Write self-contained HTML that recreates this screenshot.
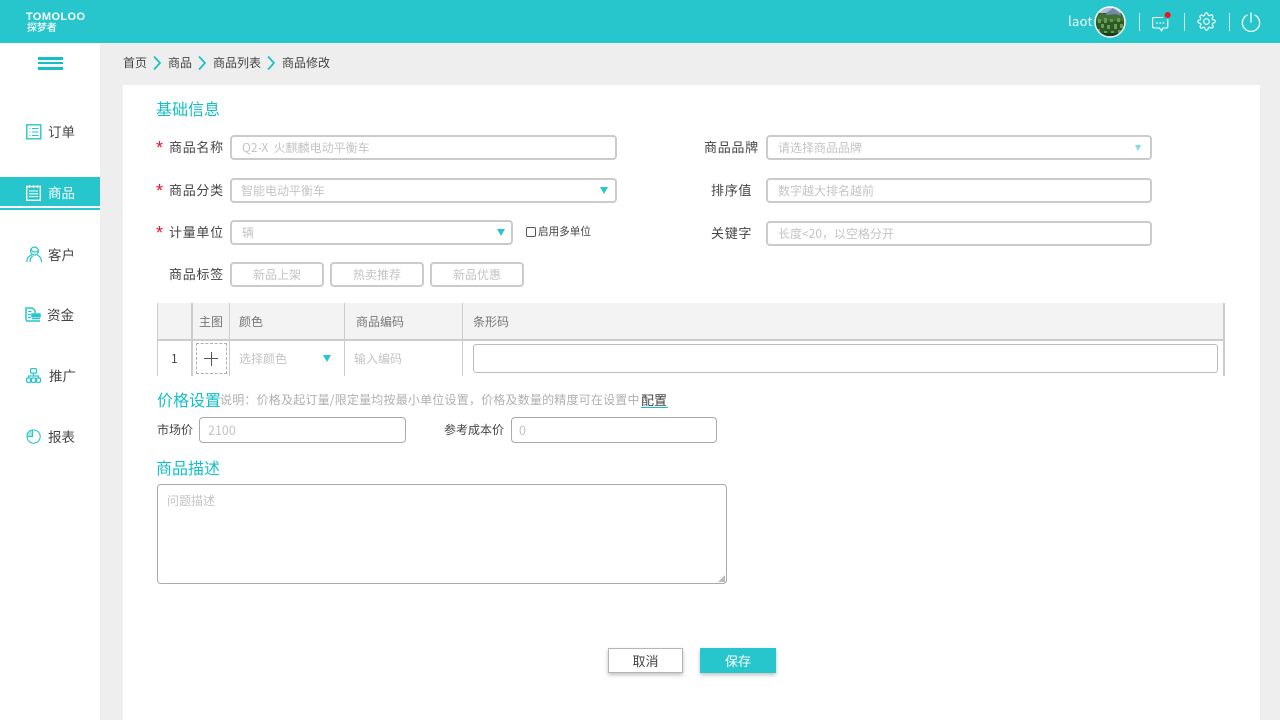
<!DOCTYPE html>
<html lang="zh-CN">
<head>
<meta charset="utf-8">
<title>商品修改</title>
<style>
html,body{margin:0;padding:0}
body{width:1280px;height:720px;overflow:hidden;position:relative;background:#eeeeee;font-family:"Liberation Sans","Noto Sans CJK SC",sans-serif;font-size:13px;color:#444}
div,span,svg{position:absolute;box-sizing:border-box}
.t{white-space:nowrap;line-height:20px;font-family:"Noto Sans CJK SC","Liberation Sans",sans-serif}
.in{background:#fff;border:2px solid #cbcbcb;border-radius:4px;height:25px;color:#c4c4c4;font-size:12px;line-height:21px;padding-left:10px;white-space:nowrap;font-family:"Noto Sans CJK SC","Liberation Sans",sans-serif}
.lab{font-size:13px;color:#444;letter-spacing:.7px}
.star{color:#f01028;font:18px/20px "Liberation Sans",sans-serif;left:156px}
.nav{font-size:13.500px;color:#444}
.tri{width:0;height:0;border-left:4px solid transparent;border-right:4px solid transparent;border-top:7px solid #26c6cc}
.h{color:#14bfc6;font-size:16px}
.v{background:#cccccc;width:2px}
.tag{text-align:center;padding:0}
</style>
</head>
<body>
<!-- header -->
<div style="left:0;top:0;width:1280px;height:43px;background:#26c6cc"></div>
<div class="t" style="left:26px;top:10px;color:#fff;font:bold 11px/14px 'Liberation Sans',sans-serif;letter-spacing:.4px">TOMOLOO</div>
<div class="t" style="left:27px;top:20px;color:#fff;font-size:10px;line-height:14px;letter-spacing:-.1px;font-weight:500">探梦者</div>

<div class="t" style="left:1068px;top:11px;color:#fff;font-size:13px;letter-spacing:.3px">laot</div>
<svg style="left:1094px;top:6px" width="32" height="32" viewBox="0 0 32 32">
<defs><clipPath id="c"><circle cx="16" cy="16" r="14.500"/></clipPath></defs>
<g clip-path="url(#c)"><rect width="32" height="32" fill="#2b5a2a"/><rect width="32" height="7" fill="#aebfd6"/><path d="M12 7l7-5 8 6v3H12z" fill="#7089a8"/><path d="M2 10l6-3 6 2 8-1 8 3v4H2z" fill="#3f7036"/>
<path d="M4 13h3v4H4zM10 12h3v5h-3zM16 13h3v3h-3zM23 12h3v4h-3zM7 18h3v4H7zM13 19h3v4h-3zM20 18h3v5h-3zM26 18h3v4h-3zM3 23h3v3H3zM10 25h3v3h-3zM17 25h3v3h-3zM24 24h3v3h-3z" fill="#6b9c4e"/>
<rect y="27" width="32" height="5" fill="#1c3a1c"/></g>
<circle cx="16" cy="16" r="15" fill="none" stroke="#fff" stroke-width="1.400"/></svg>
<div style="left:1139px;top:13px;width:1px;height:18px;background:#cdf3f4"></div>
<div style="left:1184px;top:13px;width:1px;height:18px;background:#cdf3f4"></div>
<div style="left:1229px;top:13px;width:1px;height:18px;background:#cdf3f4"></div>
<svg style="left:1152px;top:11px" width="20" height="21" viewBox="0 0 20 21" fill="none">
<path d="M11 6.500H2A1.500 1.500 0 0 0 .6 8V15.500A1.500 1.500 0 0 0 2 17H7.500L9.500 19.800L11 17H14.500A1.500 1.500 0 0 0 15.800 15.500V8" stroke="#fff" stroke-width="1.100"/>
<path d="M4.300 12h1.600M7.500 12h1.600M10.700 12h1.600" stroke="#fff" stroke-width="1.300"/>
<circle cx="15.700" cy="4" r="3" fill="#f5101c"/></svg>
<svg style="left:1197px;top:12px" width="19" height="19" viewBox="0 0 24 24" fill="none" stroke="#fff" stroke-width="1.400" stroke-linejoin="round">
<circle cx="12" cy="12" r="3.500"/>
<path d="M19.400 15a1.650 1.650 0 0 0 .33 1.820l.06.06a2 2 0 1 1-2.830 2.830l-.06-.06a1.650 1.650 0 0 0-2.800 1.170V21a2 2 0 0 1-4 0v-.09a1.650 1.650 0 0 0-2.800-1.170l-.06.06a2 2 0 1 1-2.830-2.830l.06-.06a1.650 1.650 0 0 0-1.170-2.800H3a2 2 0 0 1 0-4h.09a1.650 1.650 0 0 0 1.170-2.800l-.06-.06a2 2 0 1 1 2.830-2.830l.06.06a1.650 1.650 0 0 0 2.800-1.170V3a2 2 0 0 1 4 0v.09a1.650 1.650 0 0 0 2.800 1.170l.06-.06a2 2 0 1 1 2.830 2.830l-.06.06a1.650 1.650 0 0 0 1.170 2.800H21a2 2 0 0 1 0 4h-.09a1.650 1.650 0 0 0-1.510 1z"/></svg>
<svg style="left:1241px;top:12px" width="20" height="20" viewBox="0 0 20 20" fill="none" stroke="#fff" stroke-width="1.300" stroke-linecap="round">
<path d="M6 3.200a8.600 8.600 0 1 0 8 0"/><path d="M10 1v9"/></svg>

<!-- sidebar -->
<div style="left:0;top:43px;width:100px;height:677px;background:#fff"></div>
<div style="left:38px;top:57px;width:25px;height:3px;background:#14bfc6"></div>
<div style="left:38px;top:62px;width:25px;height:2px;background:#14bfc6"></div>
<div style="left:38px;top:67px;width:25px;height:3px;background:#14bfc6"></div>

<svg style="left:26px;top:124px" width="16" height="16" viewBox="0 0 16 16" fill="none" stroke="#26c6cc" stroke-width="1.400"><rect x=".8" y=".8" width="14" height="14"/><path d="M3.500 4.500h1M6 4.500h6.500M3.500 8h1M6 8h6.500M3.500 11.500h1M6 11.500h6.500" stroke-width="1.100"/></svg>
<div class="t nav" style="left:48px;top:121px">订单</div>

<div style="left:0;top:177px;width:100px;height:29px;background:#26c6cc"></div>
<div style="left:0;top:208px;width:100px;height:2px;background:#26c6cc"></div>
<svg style="left:26px;top:185px" width="15" height="16" viewBox="0 0 15 16" fill="none" stroke="#fff" stroke-width="1.400"><rect x=".7" y="1.500" width="13.600" height="13.800"/><path d="M3.500 0v3M7.500 0v3M11.500 0v3M3 6h9M3 8.800h9M3 11.600h9" stroke-width="1.100"/></svg>
<div class="t" style="left:48px;top:182px;color:#fff;font-size:13.500px">商品</div>

<svg style="left:26px;top:246px" width="16" height="17" viewBox="0 0 16 17" fill="none" stroke="#26c6cc" stroke-width="1.200"><circle cx="8.500" cy="5" r="4"/><path d="M5 3C6 6 9 7 12 5M.8 16c0-4 2-6 5-7M15.500 16c0-4-2-6-4.500-7M4 16c0-3 1-5 3-6"/></svg>
<div class="t nav" style="left:48px;top:244px">客户</div>

<svg style="left:25px;top:307px" width="16" height="15" viewBox="0 0 16 15" fill="none" stroke="#26c6cc" stroke-width="1.500"><path d="M1 13.500V1h6.500L10 3.500V6"/><path d="M3 4.500h3.500M3 7.500h3M3 10.500h3" stroke-width="1.200"/><rect x="7" y="7" width="8" height="2.500" fill="#26c6cc"/><path d="M7 11.500h8M1 14h14"/></svg>
<div class="t nav" style="left:47px;top:304px">资金</div>

<svg style="left:26px;top:368px" width="15" height="15" viewBox="0 0 15 15" fill="none" stroke="#26c6cc" stroke-width="1.200"><rect x="4.500" y=".6" width="6" height="4.500" rx="1"/><path d="M7.500 5v3M2.500 10V8h10v2"/><rect x=".6" y="10" width="4" height="4.400" rx="1"/><rect x="5.500" y="10" width="4" height="4.400" rx="1"/><rect x="10.400" y="10" width="4" height="4.400" rx="1"/></svg>
<div class="t nav" style="left:49px;top:365px">推广</div>

<svg style="left:26px;top:429px" width="15" height="15" viewBox="0 0 15 15" fill="none" stroke="#26c6cc" stroke-width="1.100"><path d="M6 1.200a6.600 6.600 0 1 1-5 6.800"/><path d="M1 7.500A6 6 0 0 1 6.500 1v6.500z" fill="#a8e6e8"/></svg>
<div class="t nav" style="left:48px;top:426px">报表</div>

<!-- breadcrumb -->
<div class="t" style="left:123px;top:53px;font-size:12px;color:#444">首页</div>
<div class="t" style="left:168px;top:53px;font-size:12px;color:#444">商品</div>
<div class="t" style="left:213px;top:53px;font-size:12px;color:#444">商品列表</div>
<div class="t" style="left:282px;top:53px;font-size:12px;color:#444">商品修改</div>
<svg style="left:152px;top:55px" width="10" height="16" viewBox="0 0 10 16" fill="none" stroke="#14bfc6" stroke-width="1.700"><path d="M2 1.500l6 6.500-6 6.500"/></svg>
<svg style="left:197px;top:55px" width="10" height="16" viewBox="0 0 10 16" fill="none" stroke="#14bfc6" stroke-width="1.700"><path d="M2 1.500l6 6.500-6 6.500"/></svg>
<svg style="left:266px;top:55px" width="10" height="16" viewBox="0 0 10 16" fill="none" stroke="#14bfc6" stroke-width="1.700"><path d="M2 1.500l6 6.500-6 6.500"/></svg>

<!-- main card -->
<div style="left:123px;top:85px;width:1137px;height:635px;background:#fff"></div>
<div class="t h" style="left:156px;top:98px">基础信息</div>

<div class="t star" style="top:138px">*</div>
<div class="t lab" style="left:169px;top:137px">商品名称</div>
<div class="in" style="left:230px;top:135px;width:387px;padding-left:10px">Q2-X&nbsp; 火麒麟电动平衡车</div>

<div class="t star" style="top:181px">*</div>
<div class="t lab" style="left:169px;top:180px">商品分类</div>
<div class="in" style="left:230px;top:178px;width:387px;padding-left:9px">智能电动平衡车</div>
<div class="tri" style="left:600px;top:187px"></div>

<div class="t star" style="top:223px">*</div>
<div class="t lab" style="left:169px;top:222px">计量单位</div>
<div class="in" style="left:230px;top:220px;width:283px;padding-left:10px">辆</div>
<div class="tri" style="left:497px;top:229px"></div>
<div style="left:526px;top:227px;width:10px;height:10px;border:1.200px solid #555;border-radius:2px"></div>
<div class="t" style="left:538px;top:223px;font-size:10.600px;line-height:18px;color:#444">启用多单位</div>

<div class="t lab" style="left:169px;top:264px">商品标签</div>
<div class="in tag" style="left:230px;top:262px;width:94px">新品上架</div>
<div class="in tag" style="left:330px;top:262px;width:94px">热卖推荐</div>
<div class="in tag" style="left:430px;top:262px;width:94px">新品优惠</div>

<div class="t lab" style="left:704px;top:137px">商品品牌</div>
<div class="in" style="left:766px;top:135px;width:386px;padding-left:10px">请选择商品品牌</div>
<div class="tri" style="left:1135px;top:145px;border-left-width:3.500px;border-right-width:3.500px;border-top-width:6px;border-top-color:#7fdde0"></div>
<div class="t lab" style="left:711px;top:180px">排序值</div>
<div class="in" style="left:766px;top:178px;width:386px;padding-left:10px">数字越大排名越前</div>
<div class="t lab" style="left:711px;top:223px">关键字</div>
<div class="in" style="left:766px;top:221px;width:386px;padding-left:10px">长度&lt;20，以空格分开</div>

<!-- table -->
<div style="left:157px;top:303px;width:1067px;height:36px;background:#f3f3f3"></div>
<div style="left:157px;top:339px;width:1068px;height:2px;background:#cccccc"></div>
<div class="v" style="left:157px;top:303px;height:73px;width:1px"></div>
<div class="v" style="left:191px;top:303px;height:73px"></div>
<div class="v" style="left:229px;top:303px;height:73px;width:1px"></div>
<div class="v" style="left:344px;top:303px;height:73px;width:1px"></div>
<div class="v" style="left:462px;top:303px;height:73px;width:1px"></div>
<div class="v" style="left:1223px;top:303px;height:73px"></div>
<div class="t" style="left:199px;top:312px;font-size:12px;color:#777">主图</div>
<div class="t" style="left:239px;top:312px;font-size:12px;color:#777">颜色</div>
<div class="t" style="left:356px;top:312px;font-size:12px;color:#777">商品编码</div>
<div class="t" style="left:473px;top:312px;font-size:12px;color:#777">条形码</div>
<div class="t" style="left:171px;top:349px;font-size:12px;color:#444">1</div>
<div style="left:196px;top:343px;width:31px;height:31px;border:1px dashed #b0b0b0"></div>
<div style="left:204px;top:358px;width:14px;height:1px;background:#555"></div>
<div style="left:211px;top:352px;width:1px;height:14px;background:#555"></div>
<div class="t" style="left:239px;top:349px;font-size:12px;color:#c4c4c4">选择颜色</div>
<div class="tri" style="left:323px;top:355px;border-left-width:4.500px;border-right-width:4.500px;border-top-width:7px"></div>
<div class="t" style="left:354px;top:349px;font-size:12px;color:#c4c4c4">输入编码</div>
<div style="left:473px;top:344px;width:745px;height:29px;border:1px solid #bbb;border-radius:3px;background:#fff"></div>

<!-- price -->
<div class="t h" style="left:157px;top:389px;font-size:16px">价格设置</div>
<div class="t" style="left:220px;top:390px;font-size:12px;color:#b0b0b0;letter-spacing:.2px">说明：价格及起订量/限定量均按最小单位设置，价格及数量的精度可在设置中</div>
<div class="t" style="left:641px;top:390px;font-size:13px;color:#444">配置</div>
<div style="left:641px;top:407px;width:27px;height:1px;background:#14bfc6"></div>
<div class="t" style="left:157px;top:420px;font-size:12px;color:#444">市场价</div>
<div class="in" style="left:199px;top:417px;width:207px;padding-left:8px;height:26px;font-size:12.500px;border-width:1px;border-color:#aaa;line-height:24px">2100</div>
<div class="t" style="left:444px;top:420px;font-size:12px;color:#444">参考成本价</div>
<div class="in" style="left:511px;top:417px;width:206px;padding-left:7px;height:26px;font-size:12.500px;border-width:1px;border-color:#aaa;line-height:24px">0</div>

<!-- description -->
<div class="t h" style="left:156px;top:457px">商品描述</div>
<div class="in" style="left:157px;top:484px;width:570px;height:100px;border-width:1px;border-color:#aaa;padding:6px 0 0 9px;line-height:20px">问题描述</div>
<svg style="left:717px;top:574px" width="9" height="9" viewBox="0 0 9 9"><path d="M8 1L1 8h7z" fill="#bbb"/></svg>

<!-- buttons -->
<div class="t" style="left:608px;top:648px;width:75px;height:25px;background:#fff;border:1px solid #b5b5b5;box-shadow:0 2px 4px rgba(0,0,0,.25);text-align:center;line-height:23px;color:#444">取消</div>
<div class="t" style="left:700px;top:648px;width:76px;height:25px;background:#26c6cc;box-shadow:0 2px 4px rgba(0,0,0,.25);text-align:center;line-height:25px;color:#fff">保存</div>
</body>
</html>
